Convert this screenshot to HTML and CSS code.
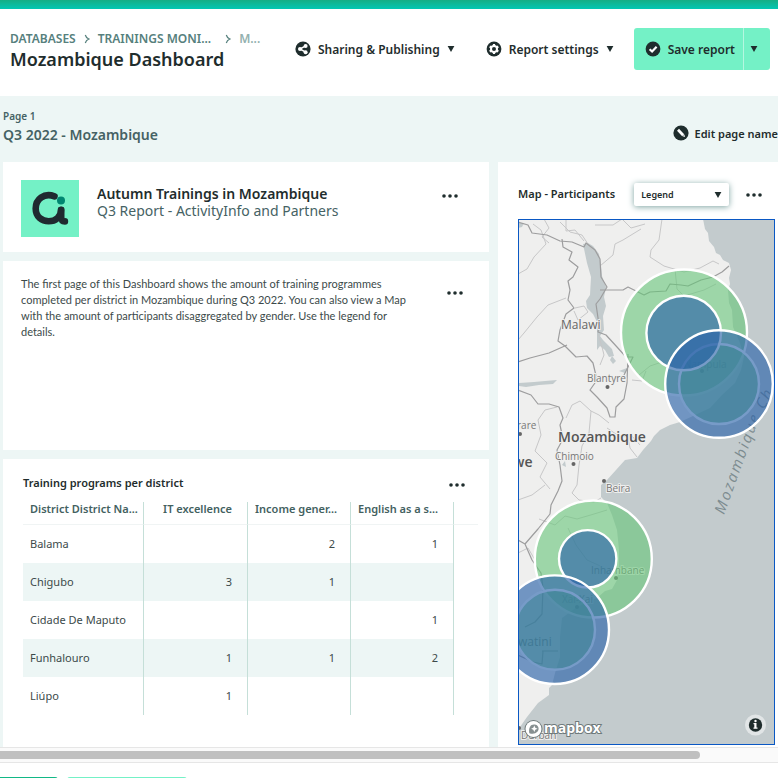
FILE: index.html
```html
<!DOCTYPE html>
<html lang="en">
<head>
<meta charset="utf-8">
<meta name="viewport" content="width=device-width, initial-scale=1">
<title>Mozambique Dashboard</title>
<link rel="stylesheet" href="styles.css">
</head>
<body>
<svg class="defs" width="0" height="0" aria-hidden="true">
  <symbol id="more" viewBox="0 0 16 6"><circle cx="2" cy="3" r="1.8"/><circle cx="8" cy="3" r="1.8"/><circle cx="14" cy="3" r="1.8"/></symbol>
  <symbol id="caret" viewBox="0 0 8 6"><path d="M0.6 0h6.8L4 6z"/></symbol>
  <symbol id="chevron" viewBox="0 0 6 10"><path d="M1.3 1Q2 3.8 4.8 5Q2 6.2 1.3 9" fill="none" stroke="currentColor" stroke-width="1.2"/></symbol>
</svg>
<div class="brandbar"></div>
<header class="header">
  <div class="heading">
    <nav class="crumbs" aria-label="Breadcrumb">
      <a href="#">DATABASES</a>
      <svg class="chevron"><use href="#chevron"/></svg>
      <a href="#" class="crumb-wide">TRAININGS MONI...</a>
      <svg class="chevron"><use href="#chevron"/></svg>
      <span class="current">M...</span>
    </nav>
    <h1>Mozambique Dashboard</h1>
  </div>
  <div class="actions">
    <button class="action" type="button">
      <svg class="icon" viewBox="0 0 16 16"><circle cx="8" cy="8" r="7.6"/><path d="M10.6 4.9L5 8l5.6 3.2" stroke="#fff" stroke-width="1.5" fill="none"/><circle cx="10.6" cy="4.9" r="2" fill="#fff"/><circle cx="5" cy="8" r="2" fill="#fff"/><circle cx="10.6" cy="11.2" r="2" fill="#fff"/></svg>
      Sharing &amp; Publishing
      <svg class="caret"><use href="#caret"/></svg>
    </button>
    <button class="action" type="button">
      <svg class="icon" viewBox="0 0 16 16"><circle cx="8" cy="8" r="7.4"/><circle cx="8" cy="8" r="3" fill="none" stroke="#fff" stroke-width="2"/><path d="M8 3v2M8 11v2M3.7 5.5l1.7 1M10.6 9.5l1.7 1M3.7 10.5l1.7-1M10.6 6.5l1.7-1" stroke="#fff" stroke-width="2.2"/></svg>
      Report settings
      <svg class="caret"><use href="#caret"/></svg>
    </button>
    <div class="save">
      <button class="save-main" type="button">
        <svg class="icon" viewBox="0 0 16 16"><circle cx="8" cy="8" r="7.4"/><path d="M4.6 8.2l2.5 2.3 4.5-4.7" stroke="#fff" stroke-width="2.2" fill="none"/></svg>
        Save report
      </button>
      <button class="save-more" type="button" aria-label="More save options"><svg class="caret"><use href="#caret"/></svg></button>
    </div>
  </div>
</header>
<main class="workspace">
  <div class="pagebar">
    <div>
      <p class="page-number">Page 1</p>
      <h2 class="page-name">Q3 2022 - Mozambique</h2>
    </div>
    <button class="edit" type="button">
      <svg class="icon" viewBox="0 0 16 16"><circle cx="8" cy="8" r="7.6"/><path d="M5 4.800l5.200 5.400" stroke="#fff" stroke-width="2.8"/><path d="M9.600 11.300l1.800-1.700.6 2.500z" fill="#fff"/></svg>
      Edit page name
    </button>
  </div>
  <div class="board">
    <div class="column">
      <section class="card intro">
        <svg class="logo" viewBox="0 0 58 57" role="img" aria-label="ActivityInfo">
          <rect width="58" height="57" fill="#74f1c6"/>
          <path d="M33.500 16.300C23 12.500 14.700 19 14.700 28.500C14.700 37 21 41.300 27.700 41.300C34.500 41.300 40 37 40 30" fill="none" stroke="#1f2a30" stroke-width="6.600" stroke-linecap="round"/>
          <path d="M40.200 29.800v7q0 4.600 3.700 4.600" fill="none" stroke="#1f2a30" stroke-width="6.600" stroke-linecap="round"/>
          <circle cx="40" cy="20.500" r="4" fill="#008771"/>
        </svg>
        <div class="intro-text">
          <h3>Autumn Trainings in Mozambique</h3>
          <p>Q3 Report - ActivityInfo and Partners</p>
        </div>
        <button class="more" type="button" aria-label="Title options"><svg><use href="#more"/></svg></button>
      </section>
      <section class="card note">
        <p>The first page of this Dashboard shows the amount of training programmes completed per district in Mozambique during Q3 2022. You can also view a Map with the amount of participants disaggregated by gender. Use the legend for details.</p>
        <button class="more" type="button" aria-label="Text options"><svg><use href="#more"/></svg></button>
      </section>
      <section class="card programs">
        <div class="programs-head">
          <h3>Training programs per district</h3>
          <button class="more" type="button" aria-label="Table options"><svg><use href="#more"/></svg></button>
        </div>
        <table>
          <colgroup><col class="c-name"><col class="c-num"><col class="c-num"><col class="c-num"><col></colgroup>
          <thead><tr><th>District District Na...</th><th>IT excellence</th><th>Income gener...</th><th>English as a s...</th><td></td></tr></thead>
          <tbody>
            <tr><td>Balama</td><td></td><td>2</td><td>1</td><td></td></tr>
            <tr><td>Chigubo</td><td>3</td><td>1</td><td></td><td></td></tr>
            <tr><td>Cidade De Maputo</td><td></td><td></td><td>1</td><td></td></tr>
            <tr><td>Funhalouro</td><td>1</td><td>1</td><td>2</td><td></td></tr>
            <tr><td>Liúpo</td><td>1</td><td></td><td></td><td></td></tr>
          </tbody>
        </table>
      </section>
    </div>
    <section class="card mapcard">
      <div class="map-head">
        <h3>Map - Participants</h3>
        <div class="legend">
          <select aria-label="Legend"><option>Legend</option></select>
          <svg class="caret"><use href="#caret"/></svg>
        </div>
        <button class="more" type="button" aria-label="Map options"><svg><use href="#more"/></svg></button>
      </div>
      <svg class="map" viewBox="518 219 257 526" role="img" aria-label="Map of participants in Mozambique">
        <rect x="518" y="219" width="257" height="526" fill="#c3cbcd"/>
        <path fill="#efefee" d="M518 219H703L705 229L708 233L709 241L714 247L716 253L720 255L723 260L729 263L731 270L729 278L730 284L728 290L729 303L732 310L733 327L740 343L744 357L741 370L735 383L722 395L710 408L695 415L680 422L670 425L660 430L654 436L651 441L643 450L637 458L625 460L616 470L607 480L601 485V497L607 503L612 515L617 530L619 550V567L617 580L612 589L605 591L597 598L577 607L562 618L560 637V657L555 673L552 685L549 688V695L538 703L527 717L520 727L518 734z"/>
        <g fill="#c3cbcd">
          <path d="M583 244L588 243L593 246L599 254L601 266L602 276L606 287L604 297L606 306L603 316L604 330L600 336L603 340L612 349L614 356L609 357L605 350L600 346L597 350L597 338L597 322L593 314L587 308L586 301L590 295L591 277L587 263z"/>
          <path d="M612 356l4 5l-3 3l-3-4z"/>
          <path d="M519 383l15-1l11-1l12-1l-4 4l-14 1l-13 2l-7-1z"/>
          <path d="M518 223l6 0l-2 4l-4 1zM562 465l3-4l1 6zM619 371l8-3l-2 5z"/>
        </g>
        <g fill="none" stroke="#c7c7c8" stroke-width="1">
          <path d="M662 219L659 240L651 250L650 257L664 266L684 272L700 268L713 261L719 264M592 250L582 235L570 232L560 222M544 219L549 228L542 237L549 243M584 241L575 230L566 231L566 219M595 225L613 225L622 219L631 228L645 224M641 229L623 240L615 244L613 255L600 266M518 274L527 269L534 257L546 244L541 230L533 224M566 298L548 305L537 317L524 333L518 340M575 308L584 306L588 312L578 320L574 311M598 334L602 347L604 355L600 365M639 375L650 366L662 362M646 371L642 381L632 380M566 418L572 405L580 401L591 411L599 415L609 423M591 411L589 433L582 446L579 465L577 485L572 493L579 500L594 502L601 498M557 407L545 410L538 420L541 435L535 451L547 463L540 477L550 489M607 428L619 436L628 437L630 448L637 457M632 436L640 445M675 269L677 289L684 296L704 290L716 284M539 519L555 525L565 516L577 519L594 514L607 510M568 528L576 545L587 560L607 569M518 553L528 548L535 560M518 500L532 495L545 485"/>
        </g>
        <g fill="none" stroke="#9d9d9e" stroke-width="1.200" stroke-linejoin="round">
          <path d="M518 222L528 225L532 233L547 235L560 241L572 242L584 247L586 243L595 250L600 259L601 277L607 287L600 299L596 304L599 325L598 332L606 335L617 347L626 357L633 357L628 367L624 375"/>
          <path d="M562 239L563 247L572 252L569 260L578 267L573 277L568 281L570 290L568 300L574 308L566 314L560 330L558 341L565 346L576 357L587 356L593 363L597 380L590 390L597 397L607 408L610 417L615 417L616 407L624 399L627 383L628 354"/>
          <path d="M600 290H623L628 287L636 291L644 295L650 292L666 291L670 284L681 285L688 286L701 280L713 277L722 272L729 266"/>
          <path d="M518 362L530 358L549 353L567 345M518 390L531 395L538 404L549 404L559 407L563 418L560 425L563 439L557 450L560 465L562 481L558 491L551 505L550 514L538 529L525 544L532 560L541 573L543 588L542 614L535 622L525 627M518 540L525 544M543 651L542 664L533 662L518 655M542 651H558"/>
        </g>
        <g class="labels">
          <text class="country" x="561" y="329">Malawi</text>
          <text class="nation" x="558" y="442">Mozambique</text>
          <text class="town" x="587" y="382">Blantyre</text>
          <text class="town" x="555" y="460">Chimoio</text>
          <text class="town" x="606" y="492">Beira</text>
          <text class="town" x="517" y="429">rare</text>
          <text class="nation" x="513" y="467">we</text>
          <text class="town" x="591" y="574">Inhambane</text>
          <text class="town" x="562" y="603">Xai-Xai</text>
          <text class="town" x="684" y="368">Nampula</text>
          <text class="country" x="518" y="646">watini</text>
          <text class="town" x="521" y="739">Durban</text>
        </g>
        <g fill="#666"><circle cx="607.500" cy="387" r="2"/><circle cx="573.500" cy="464" r="2"/><circle cx="604" cy="481" r="2"/><circle cx="520" cy="434" r="2"/><circle cx="616" cy="578" r="2"/><circle cx="577" cy="607" r="2"/><circle cx="702" cy="371" r="2"/><circle cx="519" cy="728" r="2"/></g>
        <text class="sea" transform="translate(724 515) rotate(-70)">Mozambique</text>
        <text class="sea" transform="translate(764 410) rotate(-62)">Ch</text>
        <g stroke="#fff" stroke-width="2.400">
          <g fill="#64c577" fill-opacity=".59">
            <circle cx="684" cy="332.500" r="63"/><circle cx="719" cy="384" r="40"/>
            <circle cx="593.300" cy="559" r="58.500"/><circle cx="555" cy="629.700" r="40"/>
          </g>
          <g fill="#2b63a9" fill-opacity=".64">
            <circle cx="683.700" cy="333" r="37.300"/><circle cx="719" cy="384" r="53.800"/>
            <circle cx="587.700" cy="558.800" r="28.700"/><circle cx="554.700" cy="629.700" r="54.300"/>
          </g>
        </g>
        <g class="mapbox">
          <circle cx="533.500" cy="729" r="9" fill="#6f7a7b"/>
          <circle cx="533.500" cy="729" r="8" fill="#fff"/>
          <path d="M529.300 733.200c-1-5.500 1.200-9 5.200-8.700s5.200 4.500 3 7s-5 2.600-8.200 1.700z" fill="#879091"/>
          <path d="M534.300 725.500l1 2.200 2.200 1-2.200 1-1 2.200-1-2.200-2.200-1 2.200-1z" fill="#fff"/>
          <text x="544" y="733">mapbox</text>
        </g>
        <circle cx="755.500" cy="725" r="10.500" fill="#e1e5e6"/>
        <circle cx="755.500" cy="725" r="6.700"/>
        <path d="M753.500 723h3v4.500h1v1.300h-4v-1.300h.8v-3.200h-.8z" fill="#fff"/><circle cx="755.500" cy="721" r="1.200" fill="#fff"/>
        <rect x="518.500" y="219.500" width="256" height="525" fill="none" stroke="#0a58c4"/>
      </svg>
    </section>
  </div>
</main>
<div class="scrollbar" aria-hidden="true"><div class="thumb"></div></div>
<footer class="tabs"><button class="tab tab-active" type="button" aria-label="First page"></button><button class="tab" type="button" aria-label="Second page"></button></footer>
</body>
</html>
```

FILE: styles.css
```css
* { box-sizing: border-box; }
html { height: 100%; overflow: hidden; }
body {
  margin: 0;
  height: 100%;
  display: flex;
  flex-direction: column;
  overflow: hidden;
  background: #fff;
  color: #1f2d2d;
  font-family: "Noto Sans", "Open Sans", sans-serif;
  font-size: 11px;
}
h1, h2, h3, p { margin: 0; font-weight: 600; }
button {
  display: flex;
  align-items: center;
  padding: 0;
  border: 0;
  background: none;
  color: inherit;
  font: inherit;
  font-weight: 600;
  white-space: nowrap;
}
a { color: inherit; text-decoration: none; }
svg { display: block; flex: none; fill: #1f2d2d; }
.defs { position: absolute; }
.icon { width: 16px; height: 16px; }
.caret { width: 8px; height: 6px; }
.more svg { width: 16px; height: 6px; }

.brandbar { flex: none; height: 9px; background: linear-gradient(#15ae85, #03c7b3); }
.header {
  flex: none;
  display: flex;
  justify-content: space-between;
  align-items: flex-start;
  height: 87px;
  padding: 19px 8px 0 10px;
}
.crumbs {
  display: flex;
  align-items: center;
  margin-top: 3px;
  color: #56807d;
  font-size: 12px;
  font-weight: 600;
  line-height: 16px;
  white-space: nowrap;
}
.chevron { width: 6px; height: 10px; margin: 0 8px; color: #56807d; }
.crumb-wide { margin-right: 6px; }
.current { color: #93b1af; }
h1 { font-size: 18px; line-height: 24px; }
.actions { display: flex; align-items: center; font-size: 12px; }
.action { gap: 7px; margin-right: 31px; }
.action + .action { margin-right: 20px; }
.save {
  display: flex;
  height: 42px;
  border-radius: 3px;
  background: #74f1c6;
}
.save-main { gap: 7px; padding: 0 8px 0 11px; }
.save-more { width: 27px; padding-left: 6px; border-left: 1px solid #b5f7e0; }

.workspace {
  flex: 1;
  min-height: 0;
  overflow: hidden;
  background: #edf6f5;
}
.pagebar {
  display: flex;
  justify-content: space-between;
  height: 66px;
  padding: 12px 0 0 3px;
  color: #456264;
}
.page-number { font-size: 10px; line-height: 16px; }
.page-name { font-size: 14px; line-height: 22px; }
.edit { gap: 6px; height: 50px; color: #1f2d2d; }
.board {
  display: grid;
  grid-template-columns: minmax(0, 486fr) minmax(0, 297fr);
  gap: 9px;
  width: calc(100% + 17px);
  padding-left: 3px;
}
.column { display: flex; flex-direction: column; gap: 9px; }
.card { background: #fff; }
.intro { display: flex; align-items: flex-start; gap: 18px; height: 90px; padding: 18px 31px 0 18px; }
.logo { width: 58px; height: 57px; }
.intro-text { flex: 1; padding-top: 5px; font-size: 14px; line-height: 17px; }
.intro-text h3 { font-size: 14px; }
.intro-text p { color: #456264; font-weight: 400; }
.intro .more { margin-top: 13px; }
.note { display: flex; justify-content: space-between; align-items: flex-start; height: 189px; padding: 15px 26px 0 18px; }
.note p { width: 400px; color: #3c4a4a; font-family: Lato, "Noto Sans", sans-serif; font-weight: 400; line-height: 16px; }
.note .more { margin-top: 14px; }
.programs { flex: 1; padding: 15px 11px 32px 20px; }
.programs-head { display: flex; justify-content: space-between; padding-right: 13px; line-height: 18px; }
.programs h3, .map-head h3 { font-size: 11px; }
.programs .more { margin-top: 4px; }

table { width: 100%; margin-top: 10px; border-collapse: separate; border-spacing: 0; table-layout: fixed; }
.c-name { width: 121px; }
.c-num { width: 104px; }
.c-num + .c-num { width: 103px; }
th, td { padding: 0; border-right: 1px solid #c5dfd8; text-align: right; white-space: nowrap; }
th { height: 23px; padding: 0 15px 8px 7px; color: #43615f; font-weight: 600; line-height: 14px; }
thead th, thead td { border-bottom: 1px solid #f0f4f4; }
tbody td { height: 38px; padding: 0 15px 2px 7px; color: #3c4a4a; }
th:first-child, td:first-child { padding-right: 0; text-align: left; }
th:nth-child(3), th:nth-child(4) { padding-right: 0; text-align: left; }
tr > :last-child { border-right: 0; }
tbody tr:nth-child(even) td:not(:last-child) { background: #edf6f5; }

.mapcard { padding: 20px; }
.map-head { display: flex; align-items: center; height: 25px; margin-bottom: 12px; padding-right: 13px; }
.map-head h3 { padding-bottom: 3px; white-space: nowrap; }
.map-head .more { margin-left: 17px; }
.legend { position: relative; flex: 1; margin-left: 19px; }
.legend select {
  display: block;
  width: 100%;
  height: 23px;
  padding: 0 7px;
  border: 0;
  border-radius: 2px;
  background: #fff;
  box-shadow: 0 1px 6px #7fa5a3;
  appearance: none;
  color: #1f2d2d;
  font: 600 9px "Noto Sans", sans-serif;
}
.legend .caret { position: absolute; top: 9px; right: 7px; pointer-events: none; }
.map { width: 100%; height: auto; }
.map text { font-family: "Open Sans", "Noto Sans", sans-serif; }
.labels text { fill: #777; stroke: #efefee; stroke-width: 2px; paint-order: stroke; }
.labels .country { fill: #666; font-size: 12px; font-weight: 500; }
.labels .nation { fill: #555; font-size: 14px; font-weight: 600; }
.labels .town { font-size: 10px; }
.map .sea { fill: #7d8c90; font-size: 15px; font-style: italic; letter-spacing: 2px; }
.map .mapbox text { fill: #fff; stroke: #6f7a7b; stroke-width: 2px; paint-order: stroke; font-size: 14px; font-weight: 700; }

.scrollbar { flex: none; height: 16px; padding: 3px 0; border: solid #e6e6e6; border-width: 1px 0; background: #fafafa; }
.thumb { width: 90%; height: 8px; border-radius: 0 4px 4px 0; background: #c0c0c0; }
.tabs { flex: none; display: flex; gap: 9px; height: 15px; padding-top: 14px; overflow: hidden; }
.tab { width: 120px; height: 38px; border-radius: 3px 3px 0 0; background: #74f1c6; }
.tab-active { width: 58px; border-radius: 0 3px 0 0; background: #12b886; }
```
